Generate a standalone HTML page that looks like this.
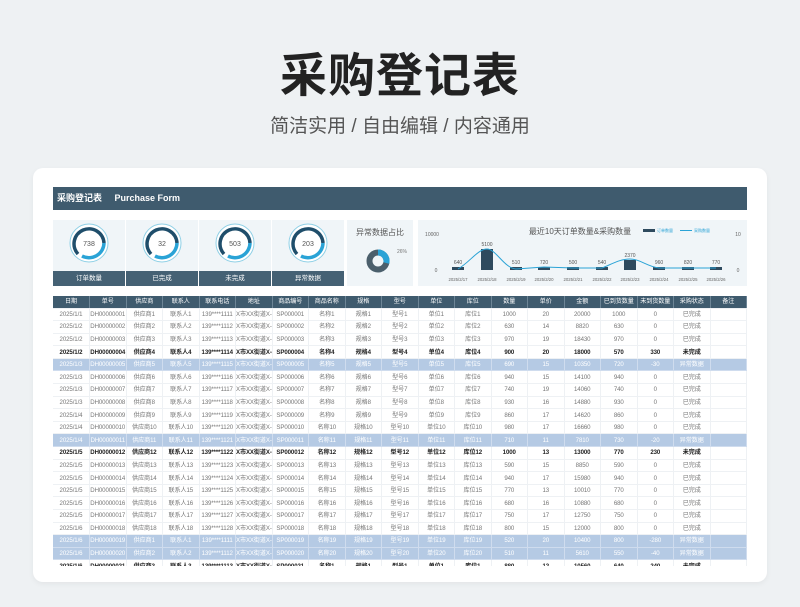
<!DOCTYPE html>
<html><head><meta charset="utf-8">
<style>
*{margin:0;padding:0;box-sizing:border-box}
body{width:800px;height:607px;background:#eef1f3;font-family:"Liberation Sans","Noto Sans CJK SC",sans-serif;position:relative;overflow:hidden}
.t{position:absolute;left:0;width:800px;text-align:center;top:37px;font-size:47px;font-weight:bold;color:#222;letter-spacing:1px}
.s{position:absolute;left:0;width:800px;text-align:center;top:111px;font-size:19px;color:#555}
.card{position:absolute;left:33px;top:168px;width:734px;height:414px;background:#fff;border-radius:10px;box-shadow:0 2px 6px rgba(0,0,0,.05)}
.hb{position:absolute;left:53px;top:187px;width:694px;height:23px;background:#3f5b6e;color:#fff;font-size:9px;font-weight:bold;line-height:23px;padding-left:4px}
.kp{position:absolute;top:220px;width:72px;height:66px;background:#f0f5f8}
.kl{position:absolute;left:0;bottom:0;width:72px;height:15px;background:#456174;color:#fff;font-size:6.5px;text-align:center;line-height:15px}
table{position:absolute;left:53px;top:296px;width:694px;border-collapse:collapse;table-layout:fixed;font-size:6.1px;letter-spacing:-0.1px}
td,th{height:12.6px;white-space:nowrap;overflow:hidden;text-align:center;border-right:1px solid #eef1f4;border-bottom:1px solid #eef1f4;color:#777;font-weight:normal;padding:0;line-height:11px}
th{background:#3f5b6e;color:#fff;height:12px;border-right:1px solid #6d8596}
tr.h td{background:#b5cae4;color:#fff;border-color:#cfdcee}
tr.b td{color:#222;font-weight:bold}
.clip{position:absolute;left:53px;top:566px;width:694px;height:10px;background:#fff}
</style></head><body>
<div class="t">采购登记表</div>
<div class="s">简洁实用 / 自由编辑 / 内容通用</div>
<div class="card"></div>
<div class="hb">采购登记表 &nbsp;&nbsp;&nbsp; Purchase Form</div>

<div class="kp" style="left:53px"><div class="kl">订单数量</div></div>
<div class="kp" style="left:126px"><div class="kl">已完成</div></div>
<div class="kp" style="left:199px"><div class="kl">未完成</div></div>
<div class="kp" style="left:272px"><div class="kl">异常数据</div></div>
<div class="kp" style="left:347px;width:66px"></div>
<div class="kp" style="left:418px;width:329px"></div>

<svg width="800" height="607" style="position:absolute;left:0;top:0" font-family="Liberation Sans, Noto Sans CJK SC, sans-serif">
<g>
 <circle cx="89" cy="243" r="19" fill="#fff" stroke="#8fd0e6" stroke-width="1"/>
 <path d="M78 254 A15 15 0 1 1 104 243" fill="none" stroke="#1f4e6b" stroke-width="3.5"/>
 <path d="M104 243 A15 15 0 0 1 82 256" fill="none" stroke="#2aa3d6" stroke-width="3.5"/>
 <text x="89" y="246" font-size="7" text-anchor="middle" fill="#555">738</text>
</g>
<g transform="translate(73,0)">
 <circle cx="89" cy="243" r="19" fill="#fff" stroke="#8fd0e6" stroke-width="1"/>
 <path d="M78 254 A15 15 0 1 1 104 243" fill="none" stroke="#1f4e6b" stroke-width="3.5"/>
 <path d="M104 243 A15 15 0 0 1 82 256" fill="none" stroke="#2aa3d6" stroke-width="3.5"/>
 <text x="89" y="246" font-size="7" text-anchor="middle" fill="#555">32</text>
</g>
<g transform="translate(146,0)">
 <circle cx="89" cy="243" r="19" fill="#fff" stroke="#8fd0e6" stroke-width="1"/>
 <path d="M78 254 A15 15 0 1 1 104 243" fill="none" stroke="#1f4e6b" stroke-width="3.5"/>
 <path d="M104 243 A15 15 0 0 1 82 256" fill="none" stroke="#2aa3d6" stroke-width="3.5"/>
 <text x="89" y="246" font-size="7" text-anchor="middle" fill="#555">503</text>
</g>
<g transform="translate(219,0)">
 <circle cx="89" cy="243" r="19" fill="#fff" stroke="#8fd0e6" stroke-width="1"/>
 <path d="M78 254 A15 15 0 1 1 104 243" fill="none" stroke="#1f4e6b" stroke-width="3.5"/>
 <path d="M104 243 A15 15 0 0 1 82 256" fill="none" stroke="#2aa3d6" stroke-width="3.5"/>
 <text x="89" y="246" font-size="7" text-anchor="middle" fill="#555">203</text>
</g>
<text x="380" y="235" font-size="8" text-anchor="middle" fill="#555">异常数据占比</text>
<circle cx="378" cy="261" r="8.5" fill="none" stroke="#4b5f6c" stroke-width="6"/>
<path d="M378 252.5 A8.5 8.5 0 0 1 386.3 263" fill="none" stroke="#2aa3d6" stroke-width="6"/>
<text x="397" y="253" font-size="5" fill="#777">26%</text>

<text x="580" y="234" font-size="8" text-anchor="middle" fill="#555">最近10天订单数量&amp;采购数量</text>
<rect x="643" y="229" width="12" height="3" fill="#2e4a5e"/><text x="657" y="232" font-size="4" fill="#2aa3d6">订单数量</text>
<line x1="680" y1="230.5" x2="692" y2="230.5" stroke="#2aa3d6"/><text x="694" y="232" font-size="4" fill="#2aa3d6">采购数量</text>
<text x="432" y="236" font-size="5" text-anchor="middle" fill="#666">10000</text>
<text x="436" y="272" font-size="5" text-anchor="middle" fill="#666">0</text>
<text x="738" y="236" font-size="5" text-anchor="middle" fill="#666">10</text>
<text x="738" y="272" font-size="5" text-anchor="middle" fill="#666">0</text>
<g fill="#2e4a5e">
<rect x="452" y="267" width="12" height="3"/>
<rect x="481" y="249" width="12" height="21"/>
<rect x="510" y="267" width="12" height="3"/>
<rect x="538" y="267" width="12" height="3"/>
<rect x="567" y="267" width="12" height="3"/>
<rect x="596" y="267" width="12" height="3"/>
<rect x="624" y="260" width="12" height="10"/>
<rect x="653" y="267" width="12" height="3"/>
<rect x="682" y="267" width="12" height="3"/>
<rect x="710" y="267" width="12" height="3"/>
</g>
<path d="M458 269 C470 262 478 249 487 249 C496 249 504 268 516 269 L544 267 L573 268 L602 268 C612 264 620 259 630 259 C640 259 648 267 659 268 L688 268 L716 268" fill="none" stroke="#2aa3d6" stroke-width="1"/>
<g font-size="5" text-anchor="middle" fill="#555">
<text x="458" y="264">640</text><text x="487" y="246">5100</text><text x="516" y="264">510</text><text x="544" y="264">720</text><text x="573" y="264">500</text><text x="602" y="264">540</text><text x="630" y="257">2370</text><text x="659" y="264">960</text><text x="688" y="264">820</text><text x="716" y="264">770</text>
</g>
<g font-size="4.3" text-anchor="middle" fill="#666">
<text x="458" y="281">2025/2/17</text><text x="487" y="281">2025/2/18</text><text x="516" y="281">2025/2/19</text><text x="544" y="281">2025/2/20</text><text x="573" y="281">2025/2/21</text><text x="602" y="281">2025/2/22</text><text x="630" y="281">2025/2/23</text><text x="659" y="281">2025/2/24</text><text x="688" y="281">2025/2/25</text><text x="716" y="281">2025/2/26</text>
</g>
</svg>

<table>
<tr><th>日期</th><th>单号</th><th>供应商</th><th>联系人</th><th>联系电话</th><th>地址</th><th>商品编号</th><th>商品名称</th><th>规格</th><th>型号</th><th>单位</th><th>库位</th><th>数量</th><th>单价</th><th>金额</th><th>已到货数量</th><th>未到货数量</th><th>采购状态</th><th>备注</th></tr>
<tr><td>2025/1/1</td><td>DH00000001</td><td>供应商1</td><td>联系人1</td><td>139****1111</td><td>X市XX街道X-1</td><td>SP000001</td><td>名称1</td><td>规格1</td><td>型号1</td><td>单位1</td><td>库位1</td><td>1000</td><td>20</td><td>20000</td><td>1000</td><td>0</td><td>已完成</td><td></td></tr>
<tr><td>2025/1/2</td><td>DH00000002</td><td>供应商2</td><td>联系人2</td><td>139****1112</td><td>X市XX街道X-2</td><td>SP000002</td><td>名称2</td><td>规格2</td><td>型号2</td><td>单位2</td><td>库位2</td><td>630</td><td>14</td><td>8820</td><td>630</td><td>0</td><td>已完成</td><td></td></tr>
<tr><td>2025/1/2</td><td>DH00000003</td><td>供应商3</td><td>联系人3</td><td>139****1113</td><td>X市XX街道X-3</td><td>SP000003</td><td>名称3</td><td>规格3</td><td>型号3</td><td>单位3</td><td>库位3</td><td>970</td><td>19</td><td>18430</td><td>970</td><td>0</td><td>已完成</td><td></td></tr>
<tr class="b"><td>2025/1/2</td><td>DH00000004</td><td>供应商4</td><td>联系人4</td><td>139****1114</td><td>X市XX街道X-4</td><td>SP000004</td><td>名称4</td><td>规格4</td><td>型号4</td><td>单位4</td><td>库位4</td><td>900</td><td>20</td><td>18000</td><td>570</td><td>330</td><td>未完成</td><td></td></tr>
<tr class="h"><td>2025/1/3</td><td>DH00000005</td><td>供应商5</td><td>联系人5</td><td>139****1115</td><td>X市XX街道X-5</td><td>SP000005</td><td>名称5</td><td>规格5</td><td>型号5</td><td>单位5</td><td>库位5</td><td>690</td><td>15</td><td>10350</td><td>720</td><td>-30</td><td>异常数据</td><td></td></tr>
<tr><td>2025/1/3</td><td>DH00000006</td><td>供应商6</td><td>联系人6</td><td>139****1116</td><td>X市XX街道X-6</td><td>SP000006</td><td>名称6</td><td>规格6</td><td>型号6</td><td>单位6</td><td>库位6</td><td>940</td><td>15</td><td>14100</td><td>940</td><td>0</td><td>已完成</td><td></td></tr>
<tr><td>2025/1/3</td><td>DH00000007</td><td>供应商7</td><td>联系人7</td><td>139****1117</td><td>X市XX街道X-7</td><td>SP000007</td><td>名称7</td><td>规格7</td><td>型号7</td><td>单位7</td><td>库位7</td><td>740</td><td>19</td><td>14060</td><td>740</td><td>0</td><td>已完成</td><td></td></tr>
<tr><td>2025/1/3</td><td>DH00000008</td><td>供应商8</td><td>联系人8</td><td>139****1118</td><td>X市XX街道X-8</td><td>SP000008</td><td>名称8</td><td>规格8</td><td>型号8</td><td>单位8</td><td>库位8</td><td>930</td><td>16</td><td>14880</td><td>930</td><td>0</td><td>已完成</td><td></td></tr>
<tr><td>2025/1/4</td><td>DH00000009</td><td>供应商9</td><td>联系人9</td><td>139****1119</td><td>X市XX街道X-9</td><td>SP000009</td><td>名称9</td><td>规格9</td><td>型号9</td><td>单位9</td><td>库位9</td><td>860</td><td>17</td><td>14620</td><td>860</td><td>0</td><td>已完成</td><td></td></tr>
<tr><td>2025/1/4</td><td>DH00000010</td><td>供应商10</td><td>联系人10</td><td>139****1120</td><td>X市XX街道X-10</td><td>SP000010</td><td>名称10</td><td>规格10</td><td>型号10</td><td>单位10</td><td>库位10</td><td>980</td><td>17</td><td>16660</td><td>980</td><td>0</td><td>已完成</td><td></td></tr>
<tr class="h"><td>2025/1/4</td><td>DH00000011</td><td>供应商11</td><td>联系人11</td><td>139****1121</td><td>X市XX街道X-11</td><td>SP000011</td><td>名称11</td><td>规格11</td><td>型号11</td><td>单位11</td><td>库位11</td><td>710</td><td>11</td><td>7810</td><td>730</td><td>-20</td><td>异常数据</td><td></td></tr>
<tr class="b"><td>2025/1/5</td><td>DH00000012</td><td>供应商12</td><td>联系人12</td><td>139****1122</td><td>X市XX街道X-12</td><td>SP000012</td><td>名称12</td><td>规格12</td><td>型号12</td><td>单位12</td><td>库位12</td><td>1000</td><td>13</td><td>13000</td><td>770</td><td>230</td><td>未完成</td><td></td></tr>
<tr><td>2025/1/5</td><td>DH00000013</td><td>供应商13</td><td>联系人13</td><td>139****1123</td><td>X市XX街道X-13</td><td>SP000013</td><td>名称13</td><td>规格13</td><td>型号13</td><td>单位13</td><td>库位13</td><td>590</td><td>15</td><td>8850</td><td>590</td><td>0</td><td>已完成</td><td></td></tr>
<tr><td>2025/1/5</td><td>DH00000014</td><td>供应商14</td><td>联系人14</td><td>139****1124</td><td>X市XX街道X-14</td><td>SP000014</td><td>名称14</td><td>规格14</td><td>型号14</td><td>单位14</td><td>库位14</td><td>940</td><td>17</td><td>15980</td><td>940</td><td>0</td><td>已完成</td><td></td></tr>
<tr><td>2025/1/5</td><td>DH00000015</td><td>供应商15</td><td>联系人15</td><td>139****1125</td><td>X市XX街道X-15</td><td>SP000015</td><td>名称15</td><td>规格15</td><td>型号15</td><td>单位15</td><td>库位15</td><td>770</td><td>13</td><td>10010</td><td>770</td><td>0</td><td>已完成</td><td></td></tr>
<tr><td>2025/1/5</td><td>DH00000016</td><td>供应商16</td><td>联系人16</td><td>139****1126</td><td>X市XX街道X-16</td><td>SP000016</td><td>名称16</td><td>规格16</td><td>型号16</td><td>单位16</td><td>库位16</td><td>680</td><td>16</td><td>10880</td><td>680</td><td>0</td><td>已完成</td><td></td></tr>
<tr><td>2025/1/5</td><td>DH00000017</td><td>供应商17</td><td>联系人17</td><td>139****1127</td><td>X市XX街道X-17</td><td>SP000017</td><td>名称17</td><td>规格17</td><td>型号17</td><td>单位17</td><td>库位17</td><td>750</td><td>17</td><td>12750</td><td>750</td><td>0</td><td>已完成</td><td></td></tr>
<tr><td>2025/1/6</td><td>DH00000018</td><td>供应商18</td><td>联系人18</td><td>139****1128</td><td>X市XX街道X-18</td><td>SP000018</td><td>名称18</td><td>规格18</td><td>型号18</td><td>单位18</td><td>库位18</td><td>800</td><td>15</td><td>12000</td><td>800</td><td>0</td><td>已完成</td><td></td></tr>
<tr class="h"><td>2025/1/6</td><td>DH00000019</td><td>供应商1</td><td>联系人1</td><td>139****1111</td><td>X市XX街道X-1</td><td>SP000019</td><td>名称19</td><td>规格19</td><td>型号19</td><td>单位19</td><td>库位19</td><td>520</td><td>20</td><td>10400</td><td>800</td><td>-280</td><td>异常数据</td><td></td></tr>
<tr class="h"><td>2025/1/6</td><td>DH00000020</td><td>供应商2</td><td>联系人2</td><td>139****1112</td><td>X市XX街道X-2</td><td>SP000020</td><td>名称20</td><td>规格20</td><td>型号20</td><td>单位20</td><td>库位20</td><td>510</td><td>11</td><td>5610</td><td>550</td><td>-40</td><td>异常数据</td><td></td></tr>
<tr class="b"><td>2025/1/6</td><td>DH00000021</td><td>供应商3</td><td>联系人3</td><td>139****1113</td><td>X市XX街道X-3</td><td>SP000021</td><td>名称1</td><td>规格1</td><td>型号1</td><td>单位1</td><td>库位1</td><td>880</td><td>12</td><td>10560</td><td>640</td><td>240</td><td>未完成</td><td></td></tr>
</table>
<div class="clip"></div>
</body></html>
